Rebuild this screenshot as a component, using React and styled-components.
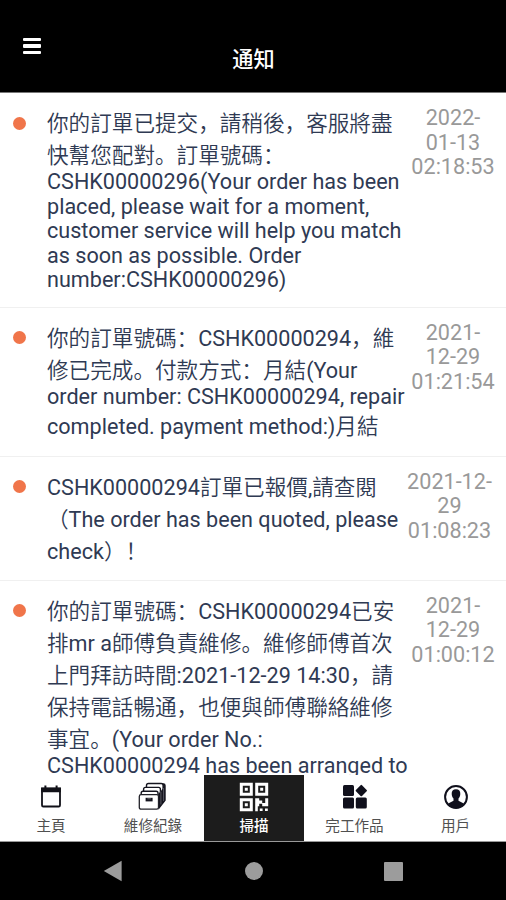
import React from 'react'
import styled, { createGlobalStyle } from 'styled-components'

const messages = [
    {
        id: 1,
        lines: [
            { text: '你的訂單已提交，請稍後，客服將盡', tall: true },
            { text: '快幫您配對。訂單號碼：', tall: true },
            { text: 'CSHK00000296(Your order has been' },
            { text: 'placed, please wait for a moment,' },
            { text: 'customer service will help you match' },
            { text: 'as soon as possible. Order' },
            { text: 'number:CSHK00000296)' },
        ],
        date: ['2022-', '01-13', '02:18:53'],
    },
    {
        id: 2,
        lines: [
            { text: '你的訂單號碼：CSHK00000294，維', tall: true },
            { text: '修已完成。付款方式：月結(Your', tall: true },
            { text: 'order number: CSHK00000294, repair' },
            { text: 'completed. payment method:)月結', tall: true },
        ],
        date: ['2021-', '12-29', '01:21:54'],
    },
    {
        id: 3,
        lines: [
            { text: 'CSHK00000294訂單已報價,請查閱', tall: true },
            { text: '（The order has been quoted, please', tall: true },
            { text: 'check）！', tall: true },
        ],
        date: ['2021-12-', '29', '01:08:23'],
        wide: true,
    },
    {
        id: 4,
        lines: [
            { text: '你的訂單號碼：CSHK00000294已安', tall: true },
            { text: '排mr a師傅負責維修。維修師傅首次', tall: true },
            { text: '上門拜訪時間:2021-12-29 14:30，請', tall: true },
            { text: '保持電話暢通，也便與師傅聯絡維修', tall: true },
            { text: '事宜。(Your order No.:', tall: true },
            { text: 'CSHK00000294 has been arranged to' },
        ],
        date: ['2021-', '12-29', '01:00:12'],
    },
]

const CalendarIcon = () => (
    <svg width='24' height='26' viewBox='0 0 24 26'>
        <path d='M3 4.5h18v16.7q0 1.3-1.3 1.3H4.3q-1.3 0-1.3-1.3z' fill='none' stroke='#111118' strokeWidth='1.8' />
        <path d='M2.1 3.8h19.8v4.4H2.1zM5.4 1.6h2v3h-2zM16.6 1.6h2v3h-2z' fill='#111118' />
    </svg>
)

const RecordsIcon = () => (
    <svg width='30' height='30' viewBox='0 0 30 30'>
        <path d='M10 1.3h15.5q2.2 0 2.2 2.2v15l-7 8.9L19 12z' fill='#15151f' />
        <g fill='#fff' stroke='#15151f' strokeWidth='1.4'>
            <path d='M8.5 9V3.4q0-1.9 1.9-1.9h12.8q1.9 0 1.9 1.9V13' />
            <path d='M5.6 11V7.2q0-1.8 1.8-1.8h13.2q1.8 0 1.8 1.8V17' />
            <path d='M3.2 14v-3q0-1.8 1.8-1.8h13.2q1.8 0 1.8 1.8V18' />
        </g>
        <path d='m20.3 12 6-7v14l-6 7.5z' fill='#15151f' />
        <path d='M22.9 9.5v13M25.6 6v13' stroke='#85858f' strokeWidth='.6' />
        <rect x='1.3' y='12.6' width='19.2' height='14.6' rx='1.8' fill='#fff' stroke='#222229' strokeWidth='1.3' />
        <path d='M7.6 15.8h7v3.6h-7z' fill='#15151f' />
        <path d='M9.4 16.8h3.4' stroke='#888' strokeWidth='.8' />
    </svg>
)

const ScanIcon = () => (
    <svg width='30' height='30' viewBox='0 0 30 30'>
        <g fill='none' stroke='#fff' strokeWidth='3'>
            <path d='M2.3 2.3h10v10h-10zM17.7 2.3h10v10h-10zM2.3 17.7h10v10h-10z' />
        </g>
        <path d='M5.8 5.8h3v3h-3zM21.2 5.8h3v3h-3zM5.8 21.2h3v3h-3z' fill='#fff' />
        <path d='M16.2 16.2h4v2.4h3v2.4h3v-4.8h3v8h-6v-2.4h-3v2.4h-1.4v5h-2.6zM20.8 26.4h2.8V29h-2.8zM26 26.4h2.8V29H26z' fill='#fff' />
    </svg>
)

const WorksIcon = () => (
    <svg width='26' height='26' viewBox='0 0 26 26'>
        <g fill='#10101c'>
            <rect x='1' y='1' width='11' height='11' rx='1.5' />
            <rect x='1' y='13.6' width='11' height='11' rx='1.5' />
            <rect x='13.8' y='13.6' width='11' height='11' rx='1.5' />
            <rect x='15' y='2.3' width='8.6' height='8.6' rx='1' transform='rotate(45 19.3 6.6)' />
        </g>
    </svg>
)

const UserIcon = () => (
    <svg width='26' height='26' viewBox='0 0 26 26'>
        <circle cx='13' cy='13' r='10.9' fill='#fff' stroke='#10101c' strokeWidth='2' />
        <path d='M13 5.2c3 0 4.5 2 4.3 4.8-.1 2.1-.9 3.6-1.8 4.6v2.2l4.8 2.5.8 1.3C19 23 16 24 13 24s-6-1-8.1-3.4l.8-1.3 4.8-2.5v-2.2c-.9-1-1.7-2.5-1.8-4.6-.2-2.8 1.3-4.8 4.3-4.8z' fill='#10101c' />
    </svg>
)

const tabs = [
    { label: '主頁', Icon: CalendarIcon },
    { label: '維修紀錄', Icon: RecordsIcon },
    { label: '掃描', Icon: ScanIcon, active: true },
    { label: '完工作品', Icon: WorksIcon },
    { label: '用戶', Icon: UserIcon },
]

function App() {
    return (
        <Screen>
            <GlobalStyle />
            <Header>
                <MenuBtn aria-label='menu'>
                    <MenuBar />
                    <MenuBar />
                    <MenuBar />
                </MenuBtn>
                <Title>通知</Title>
            </Header>
            <List>
                {messages.map((m) => (
                    <Row key={m.id}>
                        <DotWrap><Dot /></DotWrap>
                        <Message>
                            {m.lines.map((l) => (
                                <Line key={l.text} $tall={l.tall}>{l.text}</Line>
                            ))}
                        </Message>
                        <DateBox $wide={m.wide}>
                            {m.date.map((d) => <span key={d}>{d}</span>)}
                        </DateBox>
                    </Row>
                ))}
            </List>
            <TabBar>
                {tabs.map(({ label, Icon, active }) => (
                    <Tab key={label} $active={active}>
                        <IconWrap><Icon /></IconWrap>
                        <TabLabel $active={active}>{label}</TabLabel>
                    </Tab>
                ))}
            </TabBar>
            <SystemBar>
                <svg width='20' height='22' viewBox='0 0 20 22'>
                    <path d='M.8 11 18.6.8v20.4z' fill='#9c9c9c' />
                </svg>
                <HomeKey />
                <RecentKey />
            </SystemBar>
        </Screen>
    )
}

export default App

const GlobalStyle = createGlobalStyle`
body{
    margin:0;
    background-color:#000;
}
*{
    box-sizing:border-box;
}
`
const Screen = styled.div`
width:506px;
height:900px;
display:flex;
flex-direction:column;
overflow:hidden;
background-color:#fff;
font-family:Roboto, 'Noto Sans CJK SC', sans-serif;
`
const Header = styled.header`
height:93px;
flex-shrink:0;
display:grid;
grid-template-columns:1fr auto 1fr;
background-color:#000;
border-bottom:1px solid #777;
`
const MenuBtn = styled.button`
display:flex;
flex-direction:column;
gap:3px;
width:18px;
height:18px;
margin:38px 0 0 23px;
padding:0;
border:none;
background:none;
`
const MenuBar = styled.span`
width:18px;
height:3.4px;
border-radius:1px;
background-color:#fff;
`
const Title = styled.h1`
margin:44px 0 0 1px;
font-size:21.2px;
font-weight:500;
line-height:32px;
color:#fff;
`
const List = styled.main`
flex:1;
min-height:0;
overflow:hidden;
`
const Row = styled.div`
display:flex;
border-bottom:1px solid #f0f0f0;
`
const DotWrap = styled.div`
width:47px;
flex-shrink:0;
padding:23.5px 0 0 13px;
`
const Dot = styled.div`
width:13px;
height:13px;
border-radius:50%;
background-color:#f0754a;
`
const Message = styled.div`
flex:1;
min-width:0;
padding:14px 0 13.3px;
font-family:Roboto, 'Noto Sans CJK SC DemiLight', 'Noto Sans CJK SC Light', 'Noto Sans CJK SC', sans-serif;
font-size:21.6px;
color:#2f3a53;
`
// lines with chinese glyphs are taller and sit a bit lower
const Line = styled.div`
height:${({ $tall }) => ($tall ? '32px' : '24.5px')};
line-height:${({ $tall }) => ($tall ? '33px' : '22.5px')};
white-space:nowrap;
`
const DateBox = styled.div`
width:${({ $wide }) => ($wide ? '113px' : '106px')};
flex-shrink:0;
display:flex;
flex-direction:column;
align-items:center;
padding-top:13px;
font-size:21.6px;
line-height:24.5px;
color:#999;
`
const TabBar = styled.nav`
height:67px;
flex-shrink:0;
display:grid;
grid-template-columns:102px 102px 100px 101px 101px;
background-color:#fff;
border-bottom:1px solid #999;
`
const Tab = styled.div`
display:flex;
flex-direction:column;
align-items:center;
background-color:${({ $active }) => ($active ? '#1c1c1c' : '#fff')};
`
const IconWrap = styled.div`
height:30px;
margin-top:7px;
display:flex;
align-items:center;
justify-content:center;
`
const TabLabel = styled.span`
margin-top:4px;
font-size:14.6px;
line-height:20px;
font-weight:${({ $active }) => ($active ? 500 : 400)};
color:${({ $active }) => ($active ? '#fff' : '#505050')};
`
const SystemBar = styled.footer`
height:58px;
flex-shrink:0;
display:flex;
justify-content:space-between;
align-items:center;
padding:0 103px;
background-color:#000;
`
const HomeKey = styled.div`
width:18px;
height:18px;
border-radius:50%;
background-color:#9c9c9c;
`
const RecentKey = styled.div`
width:19px;
height:19px;
border-radius:1px;
background-color:#9c9c9c;
`
